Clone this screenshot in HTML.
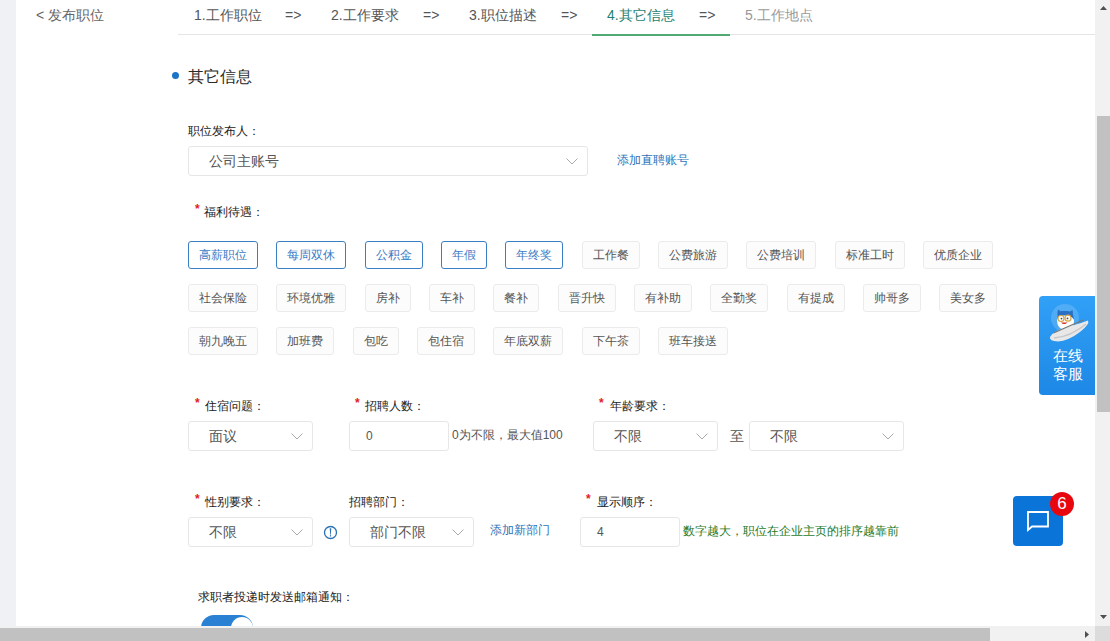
<!DOCTYPE html>
<html><head><meta charset="utf-8">
<style>
*{box-sizing:border-box;margin:0;padding:0}
html,body{width:1110px;height:641px;overflow:hidden;background:#fff;font-family:"Liberation Sans",sans-serif;color:#333}
.a{position:absolute;white-space:nowrap}
#strip{left:0;top:0;width:16px;height:626px;background:#eff1f5}
.t14{font-size:14px;line-height:16px}
.t12{font-size:12px;line-height:14px}
.tab{top:7px;color:#555}
.arr{top:7px;color:#555}
#hline{left:178px;top:34px;width:917px;height:1px;background:#e5e5e5}
#uline{left:592px;top:34px;width:138px;height:2px;background:#50a872}
.sel{border:1px solid #e6e6e6;border-radius:3px;background:#fff}
.sel .v{position:absolute;left:20px;top:0;font-size:14px;color:#555}
.chev{position:absolute;width:12px;height:7px}
.lbl{font-size:12px;color:#222}
.star{color:#e31c23;font-size:12px;font-weight:bold}
.tag{position:absolute;height:28px;border:1px solid #ebebeb;background:#fcfcfc;border-radius:3px;font-size:12px;color:#555;line-height:26px;text-align:center}
.tag.on{border-color:#3b7fc3;background:#fff;color:#3a7cc6}
.link{color:#2d72b8;font-size:12px}
.inp{border:1px solid #e6e6e6;border-radius:3px;background:#fff}
</style></head><body>
<div class="a" id="strip"></div>
<div class="a t14" style="left:36px;top:7px;color:#666">&lt; 发布职位</div>
<div class="a t14 tab" style="left:194px">1.工作职位</div>
<div class="a t14 arr" style="left:285px">=&gt;</div>
<div class="a t14 tab" style="left:331px">2.工作要求</div>
<div class="a t14 arr" style="left:423px">=&gt;</div>
<div class="a t14 tab" style="left:469px">3.职位描述</div>
<div class="a t14 arr" style="left:561px">=&gt;</div>
<div class="a t14 tab" style="left:607px;color:#1f7f75">4.其它信息</div>
<div class="a t14 arr" style="left:699px">=&gt;</div>
<div class="a t14 tab" style="left:745px;color:#999">5.工作地点</div>
<div class="a" id="hline"></div>
<div class="a" id="uline"></div>

<div class="a" style="left:172px;top:72px;width:7px;height:7px;border-radius:50%;background:#1b74c7"></div>
<div class="a" style="left:188px;top:68px;font-size:16px;line-height:18px;color:#2a2a2a">其它信息</div>

<div class="a lbl" style="left:188px;top:123px">职位发布人：</div>
<div class="a sel" style="left:188px;top:146px;width:400px;height:30px"><span class="v" style="line-height:28px">公司主账号</span>
<svg class="chev" style="left:377px;top:11px" viewBox="0 0 12 7"><path d="M0.5 0.5 L6 6 L11.5 0.5" fill="none" stroke="#aaa" stroke-width="1"/></svg></div>
<div class="a link" style="left:617px;top:152px">添加直聘账号</div>

<div class="a star" style="left:195px;top:202px">*</div>
<div class="a lbl" style="left:204px;top:204px">福利待遇：</div>

<div class="tag on" style="left:188px;top:241px;width:70px">高薪职位</div>
<div class="tag on" style="left:276px;top:241px;width:70px">每周双休</div>
<div class="tag on" style="left:365px;top:241px;width:58px">公积金</div>
<div class="tag on" style="left:441px;top:241px;width:46px">年假</div>
<div class="tag on" style="left:505px;top:241px;width:58px">年终奖</div>
<div class="tag" style="left:582px;top:241px;width:58px">工作餐</div>
<div class="tag" style="left:658px;top:241px;width:70px">公费旅游</div>
<div class="tag" style="left:746px;top:241px;width:70px">公费培训</div>
<div class="tag" style="left:835px;top:241px;width:70px">标准工时</div>
<div class="tag" style="left:923px;top:241px;width:70px">优质企业</div>
<div class="tag" style="left:188px;top:284px;width:70px">社会保险</div>
<div class="tag" style="left:276px;top:284px;width:70px">环境优雅</div>
<div class="tag" style="left:365px;top:284px;width:46px">房补</div>
<div class="tag" style="left:429px;top:284px;width:46px">车补</div>
<div class="tag" style="left:493px;top:284px;width:46px">餐补</div>
<div class="tag" style="left:558px;top:284px;width:58px">晋升快</div>
<div class="tag" style="left:634px;top:284px;width:58px">有补助</div>
<div class="tag" style="left:710px;top:284px;width:58px">全勤奖</div>
<div class="tag" style="left:787px;top:284px;width:58px">有提成</div>
<div class="tag" style="left:863px;top:284px;width:58px">帅哥多</div>
<div class="tag" style="left:939px;top:284px;width:58px">美女多</div>
<div class="tag" style="left:188px;top:327px;width:70px">朝九晚五</div>
<div class="tag" style="left:276px;top:327px;width:58px">加班费</div>
<div class="tag" style="left:353px;top:327px;width:46px">包吃</div>
<div class="tag" style="left:417px;top:327px;width:58px">包住宿</div>
<div class="tag" style="left:493px;top:327px;width:70px">年底双薪</div>
<div class="tag" style="left:582px;top:327px;width:58px">下午茶</div>
<div class="tag" style="left:658px;top:327px;width:70px">班车接送</div>


<div class="a star" style="left:195px;top:396px">*</div>
<div class="a lbl" style="left:205px;top:398px">住宿问题：</div>
<div class="a sel" style="left:188px;top:421px;width:125px;height:30px"><span class="v" style="line-height:28px">面议</span><svg class="chev" style="left:102px;top:11px" viewBox="0 0 12 7"><path d="M0.5 0.5 L6 6 L11.5 0.5" fill="none" stroke="#aaa" stroke-width="1"/></svg></div>

<div class="a star" style="left:355px;top:396px">*</div>
<div class="a lbl" style="left:365px;top:398px">招聘人数：</div>
<div class="a inp" style="left:349px;top:421px;width:100px;height:30px"><span class="a" style="left:16px;top:0;line-height:28px;font-size:12px;color:#555">0</span></div>
<div class="a" style="left:452px;top:428px;font-size:12px;line-height:14px;color:#555">0为不限，最大值100</div>

<div class="a star" style="left:599px;top:396px">*</div>
<div class="a lbl" style="left:610px;top:398px">年龄要求：</div>
<div class="a sel" style="left:593px;top:421px;width:125px;height:30px"><span class="v" style="line-height:28px">不限</span><svg class="chev" style="left:102px;top:11px" viewBox="0 0 12 7"><path d="M0.5 0.5 L6 6 L11.5 0.5" fill="none" stroke="#aaa" stroke-width="1"/></svg></div>
<div class="a" style="left:730px;top:428px;font-size:14px;line-height:16px;color:#555">至</div>
<div class="a sel" style="left:749px;top:421px;width:155px;height:30px"><span class="v" style="line-height:28px">不限</span><svg class="chev" style="left:132px;top:11px" viewBox="0 0 12 7"><path d="M0.5 0.5 L6 6 L11.5 0.5" fill="none" stroke="#aaa" stroke-width="1"/></svg></div>

<div class="a star" style="left:195px;top:492px">*</div>
<div class="a lbl" style="left:205px;top:494px">性别要求：</div>
<div class="a sel" style="left:188px;top:517px;width:125px;height:30px"><span class="v" style="line-height:28px">不限</span><svg class="chev" style="left:102px;top:11px" viewBox="0 0 12 7"><path d="M0.5 0.5 L6 6 L11.5 0.5" fill="none" stroke="#aaa" stroke-width="1"/></svg></div>
<svg class="a" style="left:323px;top:525px" width="15" height="15" viewBox="0 0 15 15"><circle cx="7.5" cy="7.5" r="6" fill="none" stroke="#2c72b6" stroke-width="1.3"/><path d="M6.7 3.3 H8.3 L7.8 9.8 H7.2Z" fill="#2c72b6"/><rect x="6.9" y="10.2" width="1.2" height="1.3" fill="#2c72b6"/></svg>

<div class="a lbl" style="left:349px;top:494px">招聘部门：</div>
<div class="a sel" style="left:349px;top:517px;width:125px;height:30px"><span class="v" style="line-height:28px">部门不限</span><svg class="chev" style="left:102px;top:11px" viewBox="0 0 12 7"><path d="M0.5 0.5 L6 6 L11.5 0.5" fill="none" stroke="#aaa" stroke-width="1"/></svg></div>
<div class="a link" style="left:490px;top:522px">添加新部门</div>

<div class="a star" style="left:586px;top:492px">*</div>
<div class="a lbl" style="left:597px;top:494px">显示顺序：</div>
<div class="a inp" style="left:580px;top:517px;width:100px;height:30px"><span class="a" style="left:16px;top:0;line-height:28px;font-size:12px;color:#555">4</span></div>
<div class="a" style="left:683px;top:524px;font-size:12px;line-height:14px;color:#1f7a1f">数字越大，职位在企业主页的排序越靠前</div>

<div class="a lbl" style="left:198px;top:589px">求职者投递时发送邮箱通知：</div>
<div class="a" style="left:201px;top:615px;width:52px;height:26px;border-radius:13px;background:#2a80d2"></div>
<div class="a" style="left:231px;top:617px;width:22px;height:22px;border-radius:50%;background:#fff"></div>

<!-- online service widget -->
<div class="a" style="left:1039px;top:296px;width:56px;height:99px;border-radius:4px 0 0 4px;background:linear-gradient(#31a0f7,#1d88e5)"></div>
<div class="a" style="left:1040px;top:347px;width:56px;text-align:center;font-size:15px;line-height:18px;color:#fff;white-space:normal">在线<br>客服</div>
<svg class="a" style="left:1044px;top:300px" width="50" height="46" viewBox="0 0 50 46">
 <circle cx="21" cy="18" r="14" fill="#b5dcf8" opacity="0.25"/>
 <path d="M13 20 Q13 29 21 30 Q31 29 30 20 Q26 14 21 15 Q15 14 13 20Z" fill="#fff"/>
 <path d="M13.5 19 L13.5 12 Q17 10.5 21 11 Q26 10.5 28.5 12.5 L30 19 Q27 15 21 15.5 Q16 15 13.5 19Z" fill="#2a6fc4"/>
 <path d="M13.5 12.5 L14 9.5 L17 11.5Z M26 11.5 L28.5 10 L29 13.5Z" fill="#2a6fc4"/>
 <circle cx="17" cy="18.5" r="3" fill="#fff" stroke="#d9a548" stroke-width="1.2"/>
 <circle cx="24" cy="18.2" r="3" fill="#fff" stroke="#d9a548" stroke-width="1.2"/>
 <circle cx="17.5" cy="18.6" r="0.9" fill="#444"/><circle cx="23.5" cy="18.4" r="0.9" fill="#444"/>
 <path d="M17 22.5 Q20 25.5 23.5 22.5 Z" fill="#d9241c"/>
 <path d="M6 37 Q10 30 24 27 Q40 22 44 20.5 Q46 24 36 32 Q24 41 14 41.5 Q5 41 6 37Z" fill="#e8e8e8"/>
 <path d="M9.5 33 Q 22 27.5 39 20" fill="none" stroke="#777" stroke-width="1.3"/>
 <path d="M10 38 Q 26 37 42 24" fill="none" stroke="#c8c8c8" stroke-width="1.5"/>
</svg>

<!-- chat button -->
<div class="a" style="left:1013px;top:496px;width:50px;height:50px;border-radius:4px;background:#0b74d8"></div>
<svg class="a" style="left:1013px;top:496px" width="50" height="50" viewBox="0 0 50 50"><path d="M15 16 H35 V30.5 H19 L15 34 Z" fill="none" stroke="#fff" stroke-width="1.8" stroke-linejoin="miter"/></svg>
<div class="a" style="left:1050px;top:492px;width:24px;height:24px;border-radius:50%;background:#e8070f;color:#fff;font-size:17px;line-height:24px;text-align:center">6</div>

<!-- scrollbars -->
<div class="a" style="left:1095px;top:0;width:15px;height:626px;background:#f1f1f1"></div>
<div class="a" style="left:1097px;top:116px;width:13px;height:296px;background:#c1c1c1"></div>
<svg class="a" style="left:1095px;top:0" width="15" height="15" viewBox="0 0 15 15"><path d="M5 10 L12 10 L8.5 6Z" fill="#505050"/></svg>
<svg class="a" style="left:1095px;top:611px" width="15" height="15" viewBox="0 0 15 15"><path d="M5 4 L12 4 L8.5 8Z" fill="#505050"/></svg>
<div class="a" style="left:0;top:626px;width:1095px;height:15px;background:#f1f1f1"></div>
<div class="a" style="left:0;top:628px;width:990px;height:13px;background:#c1c1c1"></div>
<svg class="a" style="left:1080px;top:626px" width="15" height="15" viewBox="0 0 15 15"><path d="M5 5 L5 12 L9 8.5Z" fill="#505050"/></svg>
<div class="a" style="left:1095px;top:626px;width:15px;height:15px;background:#dcdcdc"></div>
</body></html>
